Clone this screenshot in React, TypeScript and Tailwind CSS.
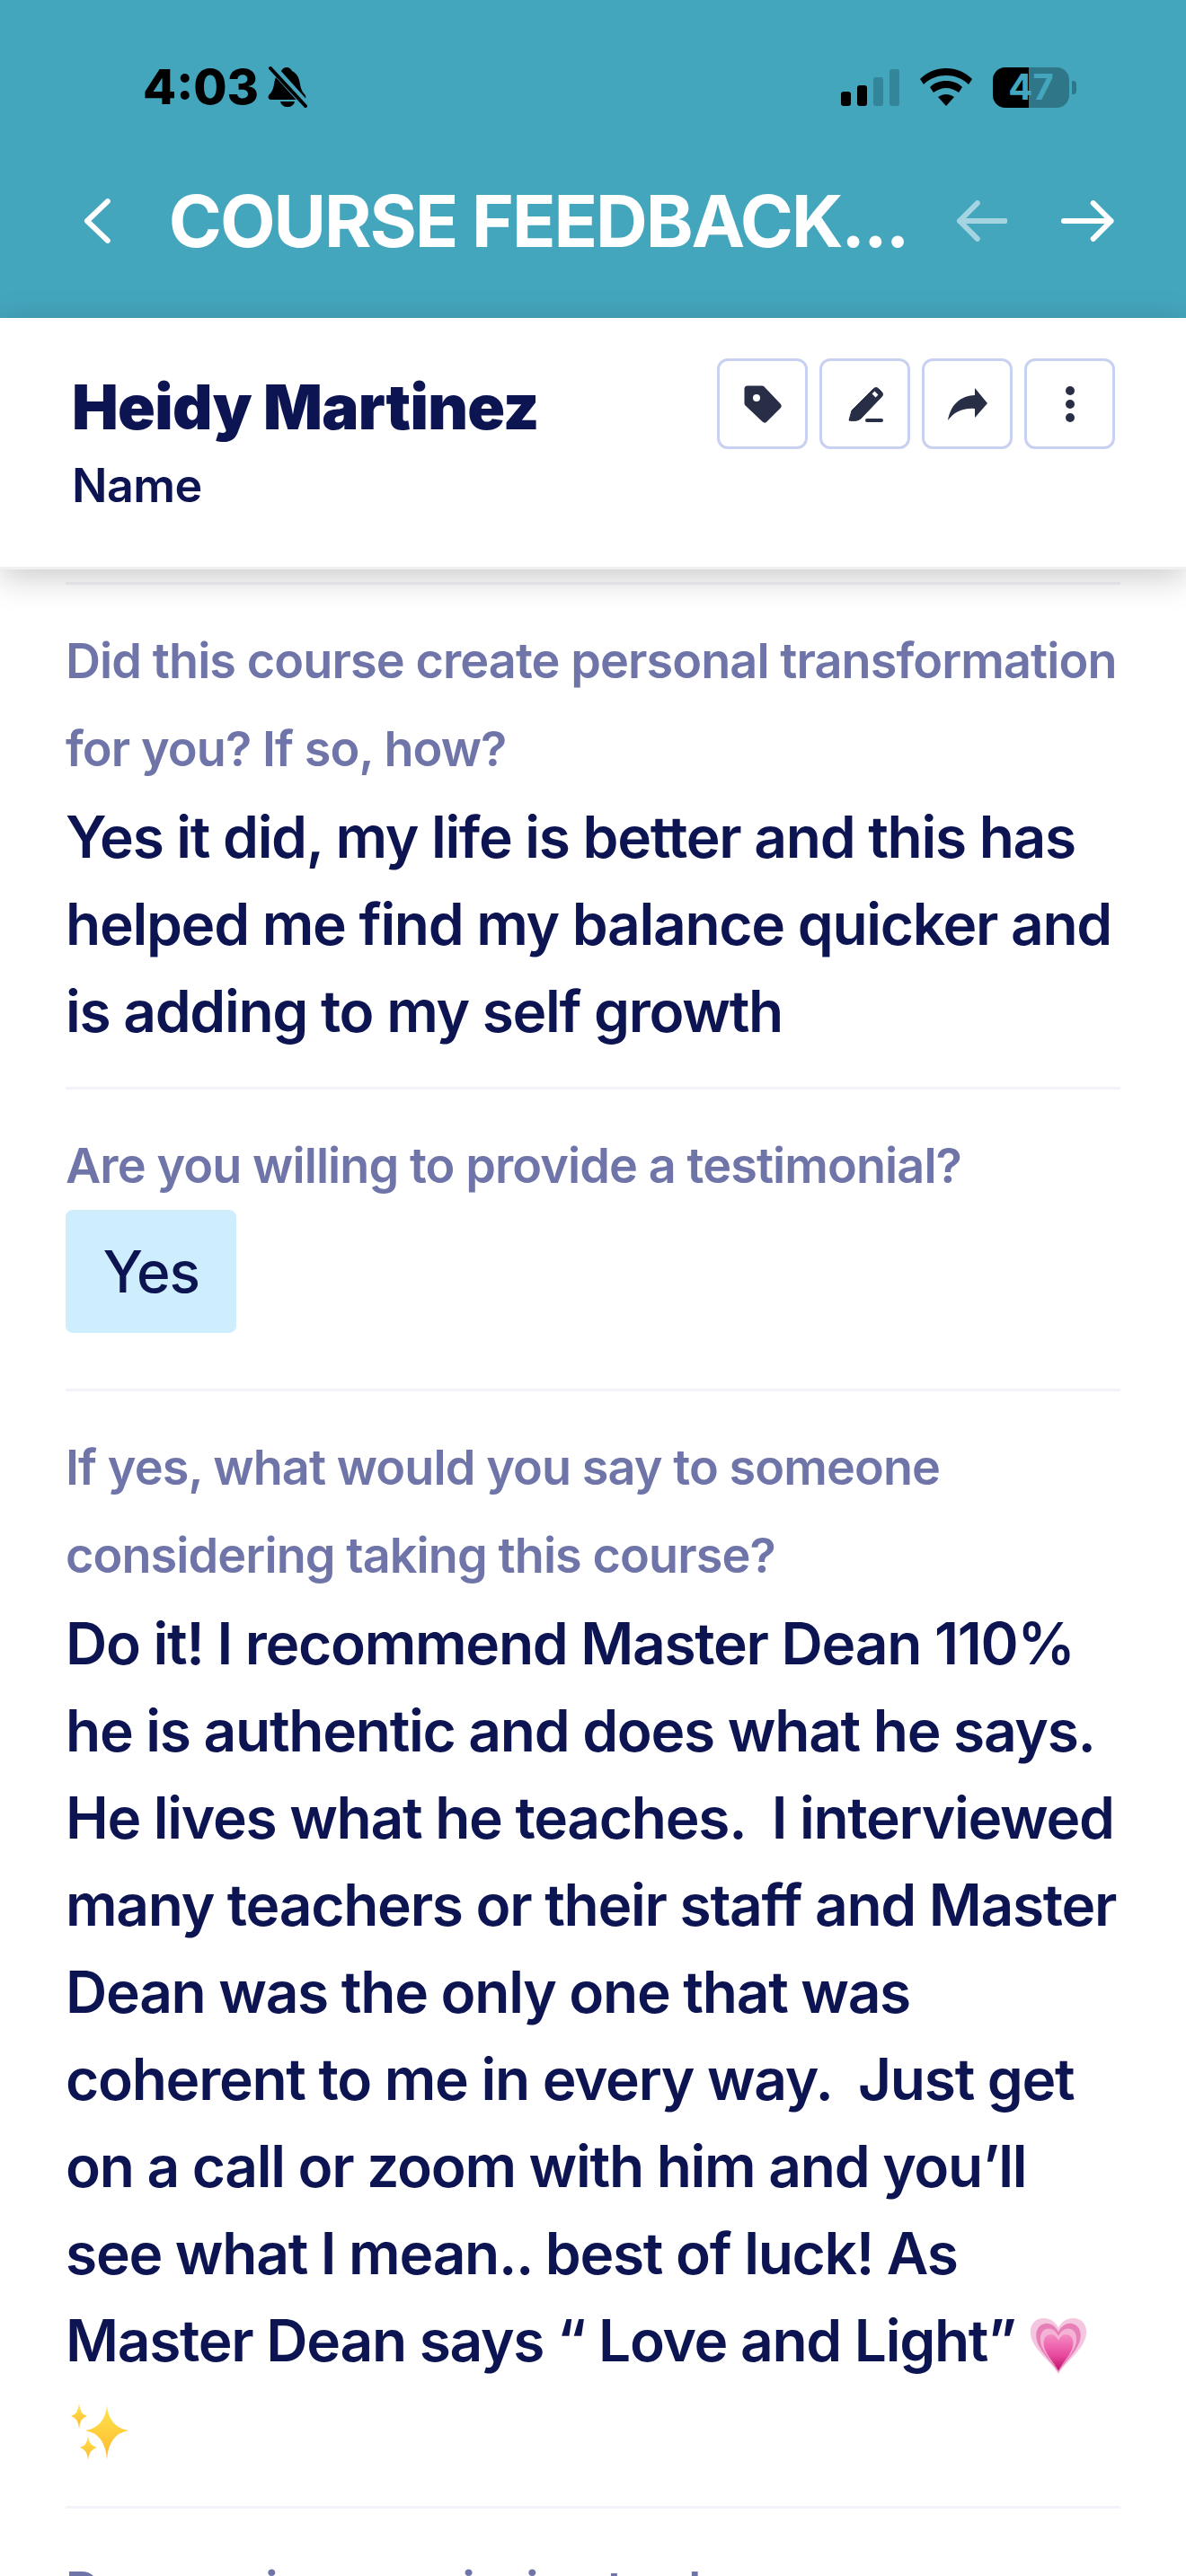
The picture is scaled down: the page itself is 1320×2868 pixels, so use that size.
import React from "react";

const font = { fontFamily: "Inter, sans-serif" };

function Heart() {
  return (
    <svg width="66" height="63" viewBox="0 0 72 66" preserveAspectRatio="none" className="inline-block align-[-14px]">
      <defs>
        <linearGradient id="hg" x1="0" y1="0" x2="0" y2="1">
          <stop offset="0" stopColor="#f48cc4" />
          <stop offset="0.6" stopColor="#e8479c" />
          <stop offset="1" stopColor="#b9146a" />
        </linearGradient>
      </defs>
      <path d="M36 66C26 50 2 36 2 17 2 7 9 1 18 1c8 0 14 4 18 11 4-7 10-11 18-11 9 0 16 6 16 16 0 19-24 33-34 49Z" fill="#f5c6e0" />
      <path d="M36 64C27 50 9 37 9 21 9 12 15 7 22 7c6 0 11 4 14 10 3-6 8-10 14-10 7 0 13 5 13 14 0 16-18 29-27 43Z" fill="#e77fb8" />
      <path d="M36 62C28 50 14 39 14 25c0-8 5-12 10-12 5 0 9 3 12 9 3-6 7-9 12-9 5 0 10 4 10 12 0 14-14 25-22 37Z" fill="#f4b2d5" />
      <path d="M36 62C29 50 18 41 18 30c0-6 4-10 9-10 4 0 7 3 9 7 2-4 5-7 9-7 5 0 9 4 9 10 0 11-11 20-18 32Z" fill="url(#hg)" />
    </svg>
  );
}

function Sparkles() {
  return (
    <svg width="66" height="64" viewBox="0 0 66 64" className="inline-block align-[-14px] ml-[5px]">
      <defs>
        <linearGradient id="sg" x1="0" y1="0" x2="0" y2="1">
          <stop offset="0" stopColor="#ffe44d" />
          <stop offset="1" stopColor="#fdb92e" />
        </linearGradient>
      </defs>
      <path d="M41 2Q43 26 65 30 43 34 41 62 39 34 17 30 39 26 41 2Z" fill="url(#sg)" />
      <path d="M10 0Q11 12 19 14 11 16 10 28 9 16 1 14 9 12 10 0Z" fill="url(#sg)" />
      <path d="M20 36Q21 47 30 49 21 51 20 63 19 51 11 49 19 47 20 36Z" fill="url(#sg)" />
    </svg>
  );
}

function Bell() {
  return (
    <svg width="44" height="46" viewBox="0 0 44 46" className="ml-[10px]">
      <path d="M21 1c3 0 5 2 6 4 6 3 8 8 9 15 1 5 2 8 5 11 2 2 2 5-1 6H3c-3-1-3-4-1-6 3-3 4-6 5-11 1-7 3-12 8-15 1-2 3-4 6-4Z" fill="#000" />
      <path d="M14 39h16c-1 4-4 6-8 6s-7-2-8-6Z" fill="#000" />
      <path d="M5 1l38 42" stroke="#44a6bd" strokeWidth="9" />
      <path d="M3 2l39 42" stroke="#000" strokeWidth="4" strokeLinecap="round" />
    </svg>
  );
}

function StatusIcons() {
  return (
    <div className="flex items-center">
      <div className="flex items-end gap-[7px] h-[41px]">
        <div className="w-[11px] h-[16px] rounded-[3px] bg-black" />
        <div className="w-[11px] h-[23px] rounded-[3px] bg-black" />
        <div className="w-[11px] h-[32px] rounded-[3px] bg-[#33859a]" />
        <div className="w-[11px] h-[41px] rounded-[3px] bg-[#33859a]" />
      </div>
      <svg width="58" height="42" viewBox="0 0 58 42" className="ml-[23px]">
        <path d="M29 0c11 0 21 4 29 12l-4 6C47 11 38 8 29 8S11 11 4 18l-4-6C8 4 18 0 29 0Z" />
        <path d="M29 14c7 0 13 2 18 7l-4 6c-4-3-9-5-14-5s-10 2-14 5l-4-6c5-5 11-7 18-7Z" />
        <path d="M29 29c3 0 6 1 9 3l-9 10-9-10c3-2 6-3 9-3Z" />
      </svg>
      <div className="ml-[23px] w-[85px] h-[45px] rounded-[14px] flex items-center justify-center bg-[linear-gradient(to_right,#000_40px,#2f7688_40px)] text-[#44a6bd] text-[40px] font-bold leading-none">
        47
      </div>
      <div className="ml-[3px] w-[5px] h-[15px] rounded-r-[4px] bg-[#2f7688]" />
    </div>
  );
}

function NavBar() {
  return (
    <div className="flex items-center pl-[93px] pr-[79px] mt-[82px]">
      <svg width="30" height="50" viewBox="0 0 30 50" fill="none" stroke="#fff" strokeWidth="6" strokeLinecap="round" strokeLinejoin="round">
        <path d="M27 3 4 25l23 22" />
      </svg>
      <div className="ml-[65px] w-[822px] whitespace-nowrap text-white text-[80px] leading-[88px] font-bold tracking-[-0.026em]">
        COURSE FEEDBACK...
      </div>
      <svg width="58" height="46" viewBox="0 0 58 46" fill="none" stroke="#a4d4e0" strokeWidth="6" strokeLinecap="round" strokeLinejoin="round" className="ml-[54px]">
        <path d="M55 23H4M24 3 4 23l20 20" />
      </svg>
      <svg width="60" height="46" viewBox="0 0 60 46" fill="none" stroke="#fff" strokeWidth="6" strokeLinecap="round" strokeLinejoin="round" className="ml-[60px]">
        <path d="M3 23h53M36 3l20 20-20 20" />
      </svg>
    </div>
  );
}

function IconButton({ children }: { children: React.ReactNode }) {
  return (
    <div className="w-[101px] h-[101px] flex items-center justify-center rounded-[12px] border-[3px] border-[#c9d1f0] bg-white">
      {children}
    </div>
  );
}

function Section({ label, children, top = "pt-[36px]" }: { label: string; children?: React.ReactNode; top?: string }) {
  return (
    <div className={`border-t-[3px] border-[#f2f2fa] ${top}`}>
      <div className="text-[#6f75a8] text-[54px] leading-[98px] font-semibold tracking-[-0.017em]">{label}</div>
      {children}
    </div>
  );
}

export default function App() {
  return (
    <div className="w-[1320px] h-[2868px] overflow-hidden bg-white" style={font}>
      <div className="bg-[#44a6bd] h-[354px] pt-[74px]">
        <div className="flex items-center justify-between pl-[159px] pr-[122px] h-[46px]">
          <div className="flex items-center">
            <span className="text-black text-[54px] leading-[46px] font-extrabold">4:03</span>
            <Bell />
          </div>
          <StatusIcons />
        </div>
        <NavBar />
      </div>

      <div className="relative z-10 h-[280px] bg-white flex items-start justify-between pl-[80px] pr-[79px] pt-[45px] shadow-[0_8px_36px_rgba(0,0,0,0.22)] border-b-[3px] border-[#f0f0f3]">
        <div>
          <div className="text-[#0d1452] text-[69px] leading-[76px] font-black mt-[16px] tracking-[-0.01em]">Heidy Martinez</div>
          <div className="text-[#0d1452] text-[52px] leading-[60px] font-semibold mt-[20px] tracking-[-0.01em]">Name</div>
        </div>
        <div className="flex gap-[13px]">
          <IconButton>
            <svg width="42" height="42" viewBox="0 0 42 42">
              <path d="M4 4h16l18 19-15 15L4 20Z" fill="#272e45" stroke="#272e45" strokeWidth="7" strokeLinejoin="round" />
              <circle cx="14" cy="14" r="4" fill="#fff" />
            </svg>
          </IconButton>
          <IconButton>
            <svg width="40" height="40" viewBox="0 0 40 40">
              <path d="M2 38l3-11L29 3c2-2 4-2 6 0l3 3c2 2 2 4 0 6L15 36c-4 3-9 3-13 2Z" fill="#272e45" stroke="#272e45" strokeWidth="1" strokeLinejoin="round" />
              <path d="M29 7l4 4" stroke="#fff" strokeWidth="4" />
              <rect x="20" y="36" width="20" height="4" rx="2" fill="#272e45" />
            </svg>
          </IconButton>
          <IconButton>
            <svg width="44" height="36" viewBox="0 0 44 36">
              <path d="M30 0l14 17-14 16v-10C16 22 7 27 0 36 3 20 12 9 30 8Z" fill="#272e45" />
            </svg>
          </IconButton>
          <IconButton>
            <svg width="10" height="40" viewBox="0 0 10 40">
              <circle cx="5" cy="5" r="5" fill="#272e45" />
              <circle cx="5" cy="20" r="5" fill="#272e45" />
              <circle cx="5" cy="35" r="5" fill="#272e45" />
            </svg>
          </IconButton>
        </div>
      </div>

      <div className="px-[73px] pt-[14px] text-[#0d1452] text-[64px] leading-[97px] font-semibold tracking-[-0.02em] whitespace-pre-wrap">
        <Section label="Did this course create personal transformation for you? If so, how?">
          <div className="pb-[36px]">Yes it did, my life is better and this has helped me find my balance quicker and is adding to my self growth</div>
        </Section>
        <Section label="Are you willing to provide a testimonial?">
          <div className="pb-[62px]">
            <div className="w-[190px] h-[137px] flex items-center justify-center rounded-[8px] bg-[#cfeefd] font-medium">Yes</div>
          </div>
        </Section>
        <Section label="If yes, what would you say to someone considering taking this course?">
          <div className="pb-[39px]">
            {"Do it! I recommend Master Dean 110% he is authentic and does what he says. He lives what he teaches.  I interviewed many teachers or their staff and Master Dean was the only one that was coherent to me in every way.  Just get on a call or zoom with him and you’ll see what I mean.. best of luck! As Master Dean says “ Love and Light” "}
            <Heart /> <Sparkles />
          </div>
        </Section>
        <Section label="Do you give permission to share your testimonial?" top="pt-[41px]" />
      </div>
    </div>
  );
}
